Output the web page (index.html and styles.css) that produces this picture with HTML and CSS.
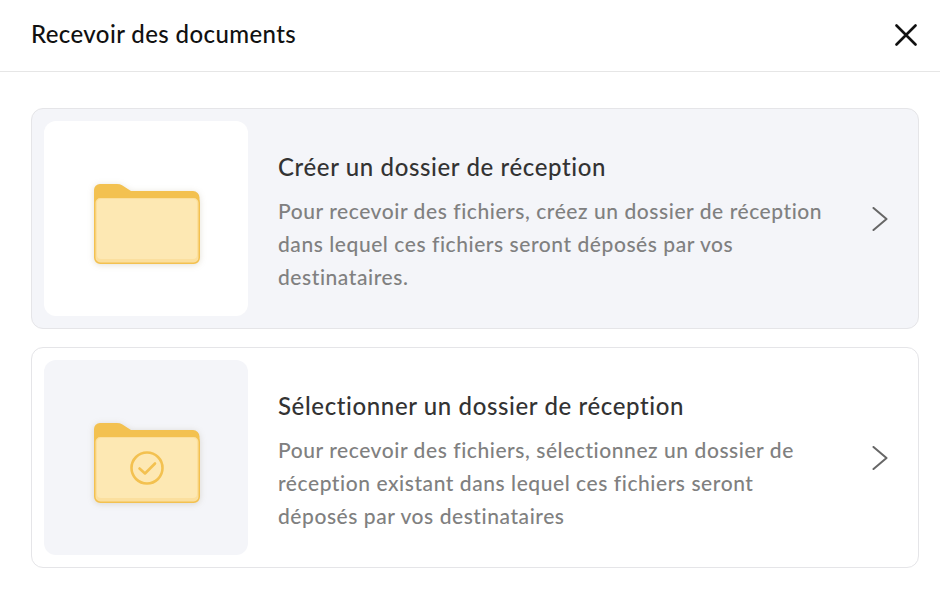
FILE: index.html
```html
<!DOCTYPE html>
<html lang="fr">
<head>
<meta charset="utf-8">
<title>Recevoir des documents</title>
<link rel="stylesheet" href="styles.css">
</head>
<body>
<header class="header">
  <h1 class="heading">Recevoir des documents</h1>
  <svg class="close" viewBox="0 0 22 22" width="22" height="22" aria-label="Fermer"><path d="M1.5 1.5 20.5 20.5M20.5 1.5 1.5 20.5"/></svg>
</header>
<main class="list">
  <section class="card card-active">
    <div class="thumb thumb-white">
      <svg class="folder" viewBox="0 0 108 91" width="108" height="91">
        <path class="f-back" d="M2 17a6 6 0 0 1 6-6h17q3 0 5 1.300l9 5.700h62a6.500 6.500 0 0 1 6.500 6.500V40H2z"/>
        <rect class="f-front" x="2.750" y="24.250" width="104.500" height="66" rx="5.500"/>
        <rect class="f-inner" x="5" y="26" width="100" height="60" rx="4"/>
      </svg>
    </div>
    <div class="body">
      <h2 class="title">Créer un dossier de réception</h2>
      <p class="desc">Pour recevoir des fichiers, créez un dossier de réception dans lequel ces fichiers seront déposés par vos destinataires.</p>
    </div>
    <svg class="chevron" viewBox="0 0 16 24" width="16" height="24"><path d="M1.500 1 14.500 12 1.500 23"/></svg>
  </section>
  <section class="card">
    <div class="thumb">
      <svg class="folder" viewBox="0 0 108 91" width="108" height="91">
        <path class="f-back" d="M2 17a6 6 0 0 1 6-6h17q3 0 5 1.300l9 5.700h62a6.500 6.500 0 0 1 6.500 6.500V40H2z"/>
        <rect class="f-front" x="2.750" y="24.250" width="104.500" height="66" rx="5.500"/>
        <rect class="f-inner" x="5" y="26" width="100" height="60" rx="4"/>
        <circle class="f-check" cx="55" cy="56" r="15.500"/>
        <path class="f-check" d="M47.500 56.500 53 61.500 63 51.500"/>
      </svg>
    </div>
    <div class="body">
      <h2 class="title">Sélectionner un dossier de réception</h2>
      <p class="desc">Pour recevoir des fichiers, sélectionnez un dossier de réception existant dans lequel ces fichiers seront déposés par vos destinataires</p>
    </div>
    <svg class="chevron" viewBox="0 0 16 24" width="16" height="24"><path d="M1.500 1 14.500 12 1.500 23"/></svg>
  </section>
</main>
</body>
</html>
```
FILE: styles.css
```css
* { box-sizing: border-box; }
html, body { margin: 0; padding: 0; }
body {
  width: 940px;
  height: 593px;
  background: #fff;
  font-family: "Lato", "Open Sans", sans-serif;
  overflow: hidden;
}
.header {
  height: 72px;
  padding: 0 23px 4px 31px;
  border-bottom: 1px solid #e6e6e6;
  display: flex;
  align-items: center;
  justify-content: space-between;
}
.heading {
  margin: 0;
  font-size: 24px;
  font-weight: 500;
  letter-spacing: 0.4px;
  color: #111;
}
.close { position: relative; top: 1px; fill: none; stroke: #111; stroke-width: 2.600; stroke-linecap: round; }
.list {
  padding: 36px 21px 0 31px;
  display: flex;
  flex-direction: column;
  gap: 18px;
}
.card {
  height: 221px;
  padding: 12px 30px 12px 12px;
  border: 1px solid #e5e5e8;
  border-radius: 12px;
  display: flex;
  align-items: center;
  background: #fff;
}
.card-active { background: #f4f5f9; }
.thumb {
  flex: none;
  width: 204px;
  height: 195px;
  border-radius: 12px;
  background: #f4f5f9;
  display: flex;
  align-items: center;
  justify-content: center;
}
.thumb-white { background: #fff; }
.folder { overflow: visible; filter: drop-shadow(0 1px 3px rgba(120, 100, 50, .2)); }
.f-back { fill: #f3c150; }
.f-front { fill: #fbdf9e; stroke: #f3c150; stroke-width: 1.500; }
.f-inner { fill: #fde8b3; }
.f-check { fill: none; stroke: #f3c150; stroke-width: 2.600; stroke-linecap: round; stroke-linejoin: round; }
.body {
  flex: 1;
  min-width: 0;
  margin-left: 30px;
  padding-top: 7px;
  padding-right: 40px;
}
.title {
  margin: 0 0 11px;
  font-size: 24px;
  font-weight: 500;
  letter-spacing: 0.62px;
  line-height: 32px;
  color: #333;
}
.desc {
  margin: 0;
  font-size: 21px;
  font-weight: 500;
  letter-spacing: 0.56px;
  line-height: 33px;
  color: #808080;
}
.chevron { flex: none; fill: none; stroke: #666; stroke-width: 2; stroke-linecap: round; stroke-linejoin: round; }
```
